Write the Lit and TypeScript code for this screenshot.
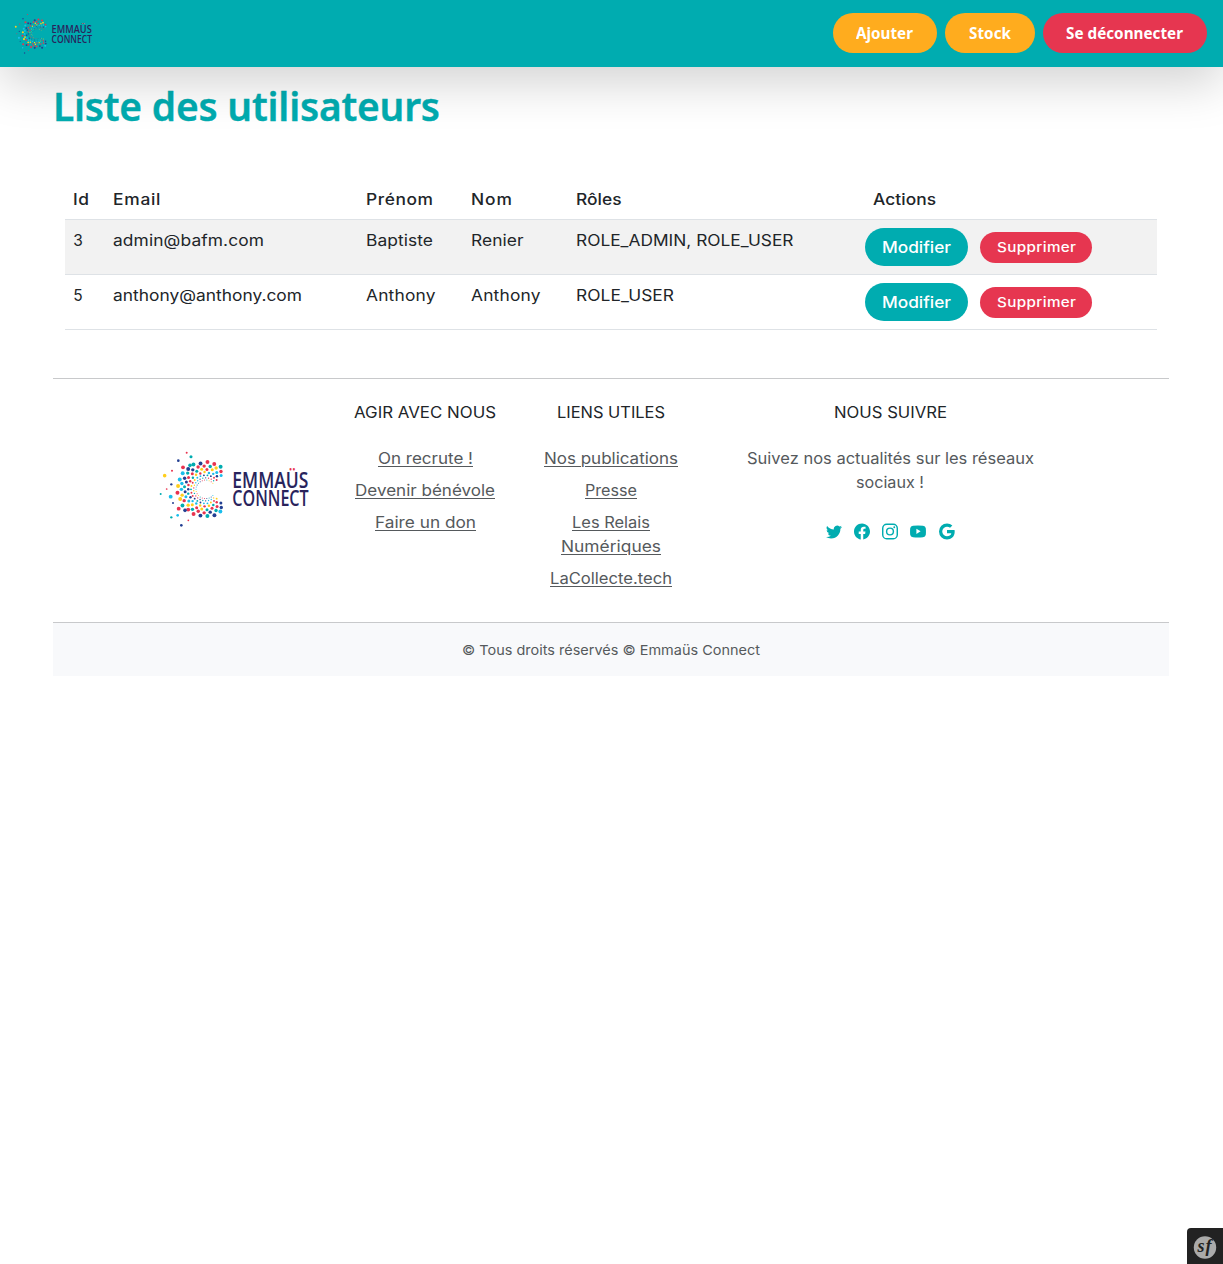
import { LitElement, html, svg, css } from "lit";
import { customElement, property } from "lit/decorators.js";

/** Text whose glyph width and tracking are adjusted so that its line takes the given width. */
@customElement("fit-text")
class FitText extends LitElement {
  @property({ type: Number }) width = 0;
  @property({ type: Number }) stretch = 0;
  static styles = css`
    :host { display: inline-block; white-space: nowrap; text-align: left; transform-origin: 0 50%; text-decoration: inherit; }
  `;
  firstUpdated() {
    const count = (this.textContent ?? "").length;
    const natural = this.getBoundingClientRect().width;
    const scale = this.stretch || Math.min(1.12, Math.max(0.94, this.width / natural));
    const inner = this.width / scale;
    const spacing = (inner - natural) / Math.max(1, count - 1);
    this.style.letterSpacing = `${spacing}px`;
    this.style.width = `${inner}px`;
    this.style.marginRight = `${this.width - inner}px`;
    this.style.transform = `scaleX(${scale})`;
  }
  render() {
    return html`<slot></slot>`;
  }
}

const RED = "#e8334f", TEAL = "#00acb0", NAVY = "#233f92", YELLOW = "#ffce1c", CYAN = "#19bdec";
const PALETTE = [RED, CYAN, NAVY, TEAL, YELLOW, NAVY, RED, YELLOW, CYAN, TEAL, RED];

type Dot = [number, number, number, string];
const LOOSE: Dot[] = [
  [110, 38, 3, RED], [123, 50, 4.6, TEAL], [85, 62, 4, NAVY], [99, 82, 5.8, RED], [120, 76, 5.4, TEAL],
  [66, 92, 3, RED], [44, 107, 5.4, YELLOW], [64, 133, 3.5, NAVY], [50, 147, 2.6, RED], [32, 162, 3, TEAL],
  [62, 170, 5.8, CYAN], [69, 189, 3, NAVY], [86, 206, 5.8, RED], [105, 211, 5.4, NAVY], [83, 226, 4, CYAN],
  [64, 232, 3.5, TEAL], [115, 241, 2.6, RED], [94, 256, 4, NAVY],
];
const RINGS: [number, number, number, number][] = [
  [29, 1.5, 26, 0], [36, 2, 26, 0], [44, 2.8, 26, 0], [53, 3.7, 25, 1], [63, 4.5, 25, 1], [73, 5.1, 25, 1], [84, 5.9, 25, 2],
];
const ringDots = (): Dot[] => {
  const dots: Dot[] = [];
  RINGS.forEach(([radius, size, n, wobble], ring) => {
    for (let i = 0; i < n; i++) {
      const a = ((i + (ring % 2) * 0.5) / n) * Math.PI * 2;
      const r = radius + Math.sin(i * 2.7 + ring) * wobble;
      const x = 167 + Math.cos(a) * r;
      const y = 148 + Math.sin(a) * r * 0.96;
      const open = Math.cos(a) > 0.78;
      if (!open && x < 228) dots.push([x, y, size, PALETTE[(i * 4 + ring * 3) % PALETTE.length]]);
    }
  });
  return dots;
};
const DOTS: Dot[] = [...ringDots(), ...LOOSE];

@customElement("brand-logo")
class BrandLogo extends LitElement {
  static styles = css`
    :host { display: block; }
    svg { display: block; width: 100%; height: 100%; overflow: visible; }
    .word { font-family: "Open Sans", "Noto Sans", sans-serif; font-weight: 600; font-size: 62px; }
  `;
  render() {
    return html`<svg viewBox="0 0 510 285">
      <defs>
        <linearGradient id="ink" gradientUnits="userSpaceOnUse" x1="0" y1="0" x2="0" y2="285">
          <stop offset="0.333" stop-color="#e8334f"></stop>
          <stop offset="0.333" stop-color="#29235c"></stop>
        </linearGradient>
      </defs>
      ${DOTS.map(([x, y, r, c]) => svg`<circle cx=${x} cy=${y} r=${r} fill=${c}></circle>`)}
      <text class="word" x="247" y="143" textLength="228" lengthAdjust="spacingAndGlyphs" fill="url(#ink)">EMMAÜS</text>
      <text class="word" x="247" y="197" textLength="229" lengthAdjust="spacingAndGlyphs" fill="#29235c">CONNECT</text>
    </svg>`;
  }
}

const USERS = [
  { id: "3", email: ["admin@bafm.com", 151], first: ["Baptiste", 67], last: ["Renier", 52.5], roles: ["ROLE_ADMIN, ROLE_USER", 217.5] },
  { id: "5", email: ["anthony@anthony.com", 189], first: ["Anthony", 69.5], last: ["Anthony", 69.5], roles: ["ROLE_USER", 98] },
] as const;
const HEADS = [["Id", 16], ["Email", 47.5], ["Prénom", 67], ["Nom", 41], ["Rôles", 45.5], ["Actions", 63]] as const;

const SOCIAL = [
  "M5.026 15c6.038 0 9.341-5.003 9.341-9.334 0-.14 0-.282-.006-.422A6.685 6.685 0 0 0 16 3.542a6.658 6.658 0 0 1-1.889.518 3.301 3.301 0 0 0 1.447-1.817 6.533 6.533 0 0 1-2.087.793A3.286 3.286 0 0 0 7.875 6.03a9.325 9.325 0 0 1-6.767-3.429 3.289 3.289 0 0 0 1.018 4.382A3.323 3.323 0 0 1 .64 6.575v.045a3.288 3.288 0 0 0 2.632 3.218 3.203 3.203 0 0 1-.865.115 3.23 3.23 0 0 1-.614-.057 3.283 3.283 0 0 0 3.067 2.277A6.588 6.588 0 0 1 .78 13.58a6.32 6.32 0 0 1-.78-.045A9.344 9.344 0 0 0 5.026 15z",
  "M16 8.049c0-4.446-3.582-8.05-8-8.05C3.58 0-.002 3.603-.002 8.05c0 4.017 2.926 7.347 6.75 7.951v-5.625h-2.03V8.05H6.75V6.275c0-2.017 1.195-3.131 3.022-3.131.876 0 1.791.157 1.791.157v1.98h-1.009c-.993 0-1.303.621-1.303 1.258v1.51h2.218l-.354 2.326H9.25V16c3.824-.604 6.75-3.934 6.75-7.951z",
  "M4.7 0h6.6A4.7 4.7 0 0 1 16 4.7v6.6a4.7 4.7 0 0 1-4.7 4.7H4.7A4.7 4.7 0 0 1 0 11.3V4.7A4.7 4.7 0 0 1 4.7 0zm.1 1.44A3.36 3.36 0 0 0 1.44 4.8v6.4a3.36 3.36 0 0 0 3.36 3.36h6.4a3.36 3.36 0 0 0 3.36-3.36V4.8a3.36 3.36 0 0 0-3.36-3.36zM12.27 2.77a.96.96 0 1 1 0 1.92.96.96 0 0 1 0-1.92zM8 3.89a4.11 4.11 0 1 1 0 8.22 4.11 4.11 0 0 1 0-8.22zm0 1.44a2.67 2.67 0 1 0 0 5.34 2.67 2.67 0 0 0 0-5.34z",
  "M3 2.2Q8 1.7 13 2.2Q15.5 2.4 15.8 4.7Q16.1 8 15.8 11.3Q15.5 13.6 13 13.8Q8 14.3 3 13.8Q.5 13.6.2 11.3Q-.1 8 .2 4.7Q.5 2.4 3 2.2zM6.4 5.2v5.2l4.2-2.6z",
  "M15.545 6.558a9.42 9.42 0 0 1 .139 1.626c0 2.434-.87 4.492-2.384 5.885h.002C11.978 15.292 10.158 16 8 16A8 8 0 1 1 8 0a7.689 7.689 0 0 1 5.352 2.082l-2.284 2.284A4.347 4.347 0 0 0 8 3.166c-2.087 0-3.86 1.408-4.492 3.304a4.792 4.792 0 0 0 0 3.063h.003c.635 1.893 2.405 3.301 4.492 3.301 1.078 0 2.004-.276 2.722-.764h-.003a3.702 3.702 0 0 0 1.599-2.431H8v-3.08h7.545z",
];

@customElement("app-root")
class AppRoot extends LitElement {
  static styles = css`
    :host { display: block; min-height: 1264px; background: #fff; color: #212529;
      font-family: Inter, "Liberation Sans", sans-serif; font-size: 15.5px; line-height: 24px; }
    * { box-sizing: border-box; }
    header { position: relative; z-index: 1; height: 67px; display: flex; align-items: center; justify-content: space-between;
      padding: 0 16.4px 0 7.5px; background: #00acb0; box-shadow: 0 16px 48px rgba(0, 0, 0, 0.175); }
    .small-logo { width: 90px; height: 52px; margin-bottom: 2px; }
    nav { display: flex; gap: 8px; margin-bottom: 1px; }
    .pill { height: 40px; display: flex; align-items: center; justify-content: center; border-radius: 20px; color: #fff;
      font: 700 16px/24px "Noto Sans", "Open Sans", sans-serif; background: #ffac1e; }
    .add { width: 104.5px; }
    .stock { width: 89.5px; }
    .logout { width: 164px; background: #e63650; }
    main { width: 1116px; margin: 0 0 0 53.25px; }
    h1 { margin: 0; padding-top: 15px; height: 112px; font: 600 40.5px/48px "Noto Sans", "Open Sans", sans-serif; color: #00acb0;
      -webkit-text-stroke: 0.4px #00acb0; }
    .table { padding: 0 12px; }
    .row { display: grid; grid-template-columns: 40px 253px 105px 105px 296.5px 1fr; border-bottom: 1px solid #dee2e6; height: 55px; padding-top: 8px; }
    .head { height: 41px; font-weight: 500; }
    .row > .cell { padding: 1px 0 0 8px; }
    .striped { background: #f2f2f2; }
    .actions { display: flex; align-items: center; gap: 12px; height: 38px; color: #fff; font-weight: 500; }
    .edit { width: 103px; height: 38px; border-radius: 19px; background: #00acb0; display: flex; align-items: center; justify-content: center; font-size: 16px; }
    .delete { width: 112.5px; height: 31px; border-radius: 15.5px; background: #e63650; display: flex; align-items: center; justify-content: center; font-size: 13.6px; }
    footer { margin-top: 48px; border-top: 1px solid #c8c9cb; }
    .columns { display: grid; grid-template-columns: 186px 186px 186px 372px; padding: 0 93px; height: 243px; text-align: center; }
    .logo { width: 170px; height: 95px; margin: 61px 0 0 3.75px; }
    .col { padding-top: 22px; color: #55595c; }
    .title { color: #212529; margin-bottom: 22px; }
    .link { margin-bottom: 8px; }
    .link a { display: block; color: #55595c; text-decoration: underline; text-decoration-thickness: 1px; text-underline-offset: 2px; }
    .social { display: flex; justify-content: center; gap: 12.2px; margin-top: 28px; }
    .social svg { width: 16px; height: 17px; fill: #00acb0; }
    .legal { border-top: 1px solid #c8c9cb; background: #f8f9fb; height: 54px; display: flex; align-items: center; justify-content: center;
      font-size: 13.6px; color: #55595c; }
    .toolbar { position: fixed; right: 0; bottom: 0; width: 36px; height: 36px; background: #222; border-radius: 4px 0 0 0; }
    .toolbar svg { display: block; width: 36px; height: 36px; }
    .sf { font: italic 700 18px "Liberation Serif", serif; }
  `;

  private fit(text: string, width: number, stretch = 0) {
    return html`<fit-text .width=${width} .stretch=${stretch}>${text}</fit-text>`;
  }

  private links(lines: (readonly [string, number])[][]) {
    return lines.map((link) => html`<div class="link">${link.map(([t, w]) => html`<a>${this.fit(t, w)}</a>`)}</div>`);
  }

  render() {
    return html`
      <header>
        <brand-logo class="small-logo"></brand-logo>
        <nav>
          <a class="pill add">${this.fit("Ajouter", 57, 0.95)}</a>
          <a class="pill stock">${this.fit("Stock", 42, 0.95)}</a>
          <a class="pill logout">${this.fit("Se déconnecter", 117, 0.95)}</a>
        </nav>
      </header>
      <main>
        <h1>${this.fit("Liste des utilisateurs", 387, 0.96)}</h1>
        <section class="table">
          <div class="row head">${HEADS.map(([t, w]) => html`<div class="cell">${this.fit(t, w)}</div>`)}</div>
          ${USERS.map((u, i) => html`<div class="row ${i % 2 ? "" : "striped"}">
            <div class="cell">${u.id}</div>
            <div class="cell">${this.fit(u.email[0], u.email[1])}</div>
            <div class="cell">${this.fit(u.first[0], u.first[1])}</div>
            <div class="cell">${this.fit(u.last[0], u.last[1])}</div>
            <div class="cell">${this.fit(u.roles[0], u.roles[1])}</div>
            <div class="actions">
              <a class="edit">${this.fit("Modifier", 69)}</a>
              <a class="delete">${this.fit("Supprimer", 79)}</a>
            </div>
          </div>`)}
        </section>
        <footer>
          <div class="columns">
            <brand-logo class="logo"></brand-logo>
            <div class="col">
              <div class="title">${this.fit("AGIR AVEC NOUS", 142)}</div>
              ${this.links([[["On recrute !", 95]], [["Devenir bénévole", 140]], [["Faire un don", 101]]])}
            </div>
            <div class="col">
              <div class="title">${this.fit("LIENS UTILES", 108)}</div>
              ${this.links([[["Nos publications", 134]], [["Presse", 52]], [["Les Relais", 78], ["Numériques", 100]], [["LaCollecte.tech", 122]]])}
            </div>
            <div class="col">
              <div class="title">${this.fit("NOUS SUIVRE", 113)}</div>
              <div>${this.fit("Suivez nos actualités sur les réseaux", 287)}</div>
              <div>${this.fit("sociaux !", 68)}</div>
              <div class="social">
                ${SOCIAL.map((d) => html`<svg viewBox="0 0 16 16"><path fill-rule="evenodd" d=${d}></path></svg>`)}
              </div>
            </div>
          </div>
          <div class="legal">${this.fit("© Tous droits réservés © Emmaüs Connect", 298)}</div>
        </footer>
      </main>
      <div class="toolbar">
        <svg viewBox="0 0 36 36">
          <circle cx="18" cy="19.5" r="11.2" fill="#aaa"></circle>
          <text class="sf" x="10.5" y="24" textLength="14" fill="#222">sf</text>
        </svg>
      </div>
    `;
  }
}
